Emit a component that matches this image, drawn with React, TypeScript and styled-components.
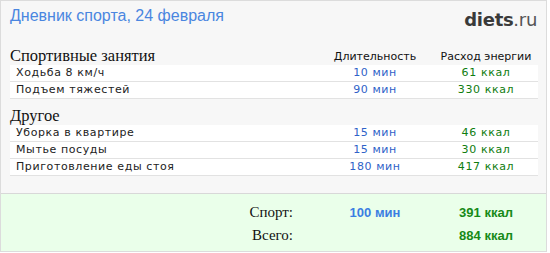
import styled, { createGlobalStyle } from 'styled-components';

const GlobalStyle = createGlobalStyle`
    html, body {
        margin: 0;
        padding: 0;
        background: #ffffff;
    }
`

const Box = styled.div`
    width: 545px;
    border: 1px solid #dcdcdc;
    background-color: #f7f7f7;
    font-family: "DejaVu Sans", Verdana, sans-serif;
`
const Header = styled.div`
    display: flex;
    justify-content: space-between;
    align-items: flex-start;
    height: 45px;
    box-sizing: border-box;
    padding: 6px 9px 0 9px;
`
const Title = styled.div`
    font-family: "Liberation Sans", Arial, sans-serif;
    font-size: 16px;
    line-height: 18px;
    color: #4a86e0;
`
const Logo = styled.div`
    font-family: "DejaVu Sans", Verdana, sans-serif;
    font-size: 18px;
    line-height: 20px;
    margin-top: 3px;
    color: #444;
    letter-spacing: -0.3px;
    b {
        font-weight: bold;
        color: #3a3a3a;
    }
    span {
        color: #555;
    }
`
const Content = styled.div`
    padding: 0 8px 0 9px;
`
const Section = styled.div<{ $gap?: number }>`
    margin-top: ${p => p.$gap ?? 0}px;
`
const Grid = styled.div`
    display: grid;
    grid-template-columns: 1fr 118px 104px;
`
const HeadRow = styled(Grid)`
    height: 19px;
    align-items: end;
`
const SectionTitle = styled.div`
    font-family: "Liberation Serif", "Times New Roman", serif;
    font-size: 16.5px;
    line-height: 19px;
    color: #111;
    align-self: start;
`
const ColTitle = styled.div`
    font-size: 11px;
    line-height: 13px;
    color: #111;
    text-align: center;
    padding-bottom: 2px;
`
const Row = styled(Grid)`
    height: 16px;
    background-color: #ffffff;
    border-bottom: 1px solid #e2e2e2;
    font-size: 11px;
    line-height: 16px;
    letter-spacing: 0.6px;
`
const Name = styled.div`
    padding-left: 6px;
    color: #222;
`
const Value = styled.div<{ $green?: boolean }>`
    text-align: center;
    color: ${p => p.$green ? '#0f7d0f' : '#2f62c8'};
`
const Footer = styled.div`
    margin-top: 17px;
    border-top: 1px solid #d8d8d8;
    background-color: #eaffea;
    padding: 7px 8px 4px 9px;
`
const TotalRow = styled(Grid)`
    align-items: baseline;
    line-height: 23px;
`
const TotalLabel = styled.div`
    font-family: "Liberation Serif", "Times New Roman", serif;
    font-size: 15px;
    color: #111;
    text-align: right;
    padding-right: 23px;
`
const TotalValue = styled.div<{ $green?: boolean }>`
    font-family: "Liberation Sans", Arial, sans-serif;
    font-size: 13px;
    font-weight: bold;
    text-align: center;
    color: ${p => p.$green ? '#178a17' : '#3a7ee2'};
`

type Activity = { name: string; min: number; kcal: number }

const sport: Activity[] = [
    { name: 'Ходьба 8 км/ч', min: 10, kcal: 61 },
    { name: 'Подъем тяжестей', min: 90, kcal: 330 },
]
const other: Activity[] = [
    { name: 'Уборка в квартире', min: 15, kcal: 46 },
    { name: 'Мытье посуды', min: 15, kcal: 30 },
    { name: 'Приготовление еды стоя', min: 180, kcal: 417 },
]

function Rows({ items }: { items: Activity[] }) {
    return (
        <>
            {items.map(a => (
                <Row key={a.name}>
                    <Name>{a.name}</Name>
                    <Value>{a.min} мин</Value>
                    <Value $green>{a.kcal} ккал</Value>
                </Row>
            ))}
        </>
    )
}

function App() {
    return (
        <>
            <GlobalStyle />
            <Box>
                <Header>
                    <Title>Дневник спорта, 24 февраля</Title>
                    <Logo><b>diets</b><span>.ru</span></Logo>
                </Header>
                <Content>
                    <Section>
                        <HeadRow>
                            <SectionTitle>Спортивные занятия</SectionTitle>
                            <ColTitle>Длительность</ColTitle>
                            <ColTitle>Расход энергии</ColTitle>
                        </HeadRow>
                        <Rows items={sport} />
                    </Section>
                    <Section $gap={7}>
                        <HeadRow>
                            <SectionTitle>Другое</SectionTitle>
                        </HeadRow>
                        <Rows items={other} />
                    </Section>
                </Content>
                <Footer>
                    <TotalRow>
                        <TotalLabel>Спорт:</TotalLabel>
                        <TotalValue>100 мин</TotalValue>
                        <TotalValue $green>391 ккал</TotalValue>
                    </TotalRow>
                    <TotalRow>
                        <TotalLabel>Всего:</TotalLabel>
                        <TotalValue />
                        <TotalValue $green>884 ккал</TotalValue>
                    </TotalRow>
                </Footer>
            </Box>
        </>
    )
}

export default App
